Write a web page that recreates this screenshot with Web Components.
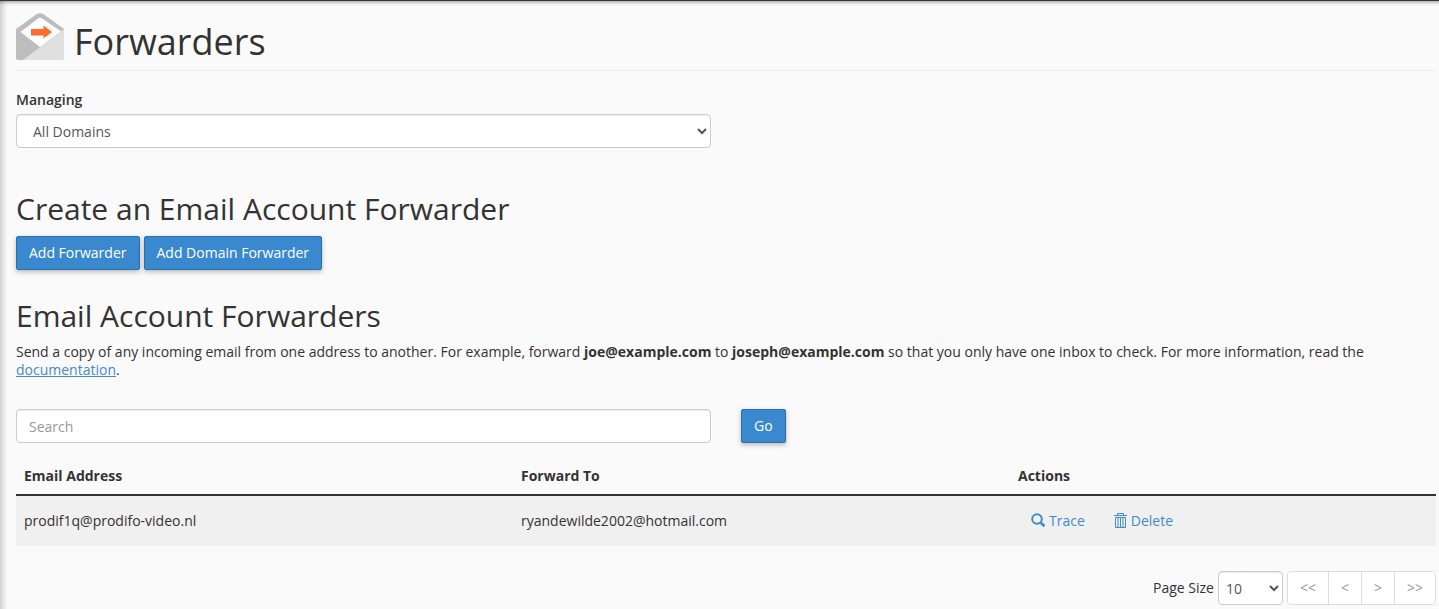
<!DOCTYPE html>
<html lang="en">
<head>
<meta charset="utf-8">
<meta name="viewport" content="width=device-width, initial-scale=1">
<title>Forwarders</title>
<style>
  html { background: #fafafa; }
  body {
    margin: 0;
    font: 14px/18px "Open Sans", "Noto Sans", sans-serif;
    color: #333;
    --link: #428bca;
    --primary: #3a89cf;
    --primary-border: #2a6fb0;
    --control-border: #ccc;
  }
</style>
</head>
<body>
<mail-panel>
  <page-title>Forwarders</page-title>
  <domain-picker></domain-picker>
  <panel-section heading="Create an Email Account Forwarder">
    <button-row>
      <action-button>Add Forwarder</action-button>
      <action-button>Add Domain Forwarder</action-button>
    </button-row>
  </panel-section>
  <panel-section heading="Email Account Forwarders">
    <intro-text></intro-text>
    <search-bar></search-bar>
    <forwarder-table></forwarder-table>
    <table-pager></table-pager>
  </panel-section>
</mail-panel>

<script>
const define = (name, html) => {
  const template = document.createElement('template');
  template.innerHTML = html;
  customElements.define(name, class extends HTMLElement {
    constructor() {
      super();
      this.attachShadow({ mode: 'open' }).append(template.content.cloneNode(true));
    }
    connectedCallback() {
      const heading = this.shadowRoot.querySelector('[data-heading]');
      if (heading) heading.textContent = this.getAttribute('heading');
    }
  });
};

define('mail-panel', `
  <style>
    :host {
      display: block; box-sizing: border-box; min-height: 100vh;
      border-top: 1px solid #293a4a;
      padding: 11px 3px 4px 16px;
      background:
        linear-gradient(to bottom, rgba(0,0,0,.3), rgba(0,0,0,.05) 3px, transparent 6px),
        linear-gradient(to right, rgba(0,0,0,.17), rgba(0,0,0,.09) 3px, transparent 7px),
        #fafafa;
    }
  </style>
  <slot></slot>`);

define('page-title', `
  <style>
    :host { display: block; border-bottom: 1px solid #eee; margin-bottom: 20px; }
    h1 { display: flex; gap: 10px; align-items: flex-start; margin: 0; height: 58px; font-size: 36px; line-height: 60px; font-weight: 400; }
    svg { width: 48px; height: 48px; }
  </style>
  <h1>
    <svg viewBox="0 0 48 48" aria-hidden="true">
      <path d="M0 17 20.500 2.300Q24 0 27.500 2.300L48 17V30L8 48H2Q0 48 0 46Z" fill="#bdbdbd"/>
      <path d="M48 17V46Q48 48 46 48H7Z" fill="#e0e0e0"/>
      <path d="M22 6.500Q24 5 26 6.500L45 19.200 24 35 4.500 20Z" fill="#fff"/>
      <path d="M15 17H27.500V13.500L36 20 27.500 26.500V23.500H15Z" fill="#ff6c2c"/>
    </svg>
    <slot></slot>
  </h1>`);

define('domain-picker', `
  <style>
    :host { display: grid; grid-template-columns: 1fr 1fr; column-gap: 30px; margin-bottom: 43px; }
    label { display: block; margin-bottom: 5px; font-weight: 600; }
    select {
      display: block; box-sizing: border-box; width: 100%; height: 34px; padding: 6px 12px;
      font: inherit; color: #555; background: #fff;
      border: 1px solid var(--control-border); border-radius: 4px;
      box-shadow: inset 0 1px 1px rgba(0,0,0,.075);
    }
  </style>
  <div>
    <label for="domain">Managing</label>
    <select id="domain"><option>All Domains</option></select>
  </div>`);

define('panel-section', `
  <style>
    :host { display: block; }
    h2 { margin: 0 0 9px; font-size: 30px; line-height: 36px; font-weight: 400; }
  </style>
  <h2 data-heading></h2>
  <slot></slot>`);

define('button-row', `
  <style>:host { display: flex; gap: 4px; margin-bottom: 28px; }</style>
  <slot></slot>`);

const buttonStyle = `
  button {
    display: block; box-sizing: border-box; height: 34px; padding: 0 12px;
    font: inherit; color: #fff; background: var(--primary);
    border: 1px solid var(--primary-border); border-radius: 2px;
    box-shadow: 0 2px 5px rgba(0,0,0,.26);
  }`;

define('action-button', `
  <style>:host { display: block; font-weight: 500; } ${buttonStyle}</style>
  <button type="button"><slot></slot></button>`);

define('intro-text', `
  <style>
    :host { display: block; margin-bottom: 30px; }
    p { margin: 0; }
    a { color: var(--link); }
  </style>
  <p>Send a copy of any incoming email from one address to another. For example, forward <strong>joe@example.com</strong> to <strong>joseph@example.com</strong> so that you only have one inbox to check. For more information, read the <a href="#documentation">documentation</a>.</p>`);

define('search-bar', `
  <style>
    :host { display: block; margin-bottom: 15px; }
    form { display: grid; grid-template-columns: 1fr 1fr; column-gap: 30px; justify-items: start; margin: 0; }
    input {
      display: block; box-sizing: border-box; width: 100%; height: 34px; padding: 6px 12px;
      font: inherit; color: #555; background: #fff;
      border: 1px solid var(--control-border); border-radius: 4px;
      box-shadow: inset 0 1px 1px rgba(0,0,0,.075);
    }
    input::placeholder { color: #999; opacity: 1; }
  </style>
  <form role="search">
    <input type="text" placeholder="Search" aria-label="Search">
    <action-button>Go</action-button>
  </form>`);

define('forwarder-table', `
  <style>
    :host { display: block; margin-bottom: 25px; }
    table { width: 100%; table-layout: fixed; border-collapse: separate; border-spacing: 0; }
    th, td { box-sizing: border-box; text-align: left; vertical-align: middle; }
    th { padding: 9px 8px; font-weight: 700; border-bottom: 2px solid #333; }
    td { height: 50px; padding: 8px; background: #f0f0f0; }
    .wide { width: 35%; }
    .actions { display: flex; gap: 28px; padding-left: 13px; }
    a { display: flex; gap: 3px; color: var(--link); text-decoration: none; }
    svg { width: 15px; height: 16px; }
  </style>
  <table>
    <thead>
      <tr><th class="wide" scope="col">Email Address</th><th class="wide" scope="col">Forward To</th><th scope="col">Actions</th></tr>
    </thead>
    <tbody>
      <tr>
        <td>prodif1q@prodifo-video.nl</td>
        <td>ryandewilde2002@hotmail.com</td>
        <td>
          <div class="actions">
            <a href="#trace"><svg viewBox="0 0 15 16" aria-hidden="true" fill="none" stroke="currentColor"><circle cx="6" cy="7" r="4.800" stroke-width="2"/><path d="m9.800 10.800 3.700 3.500" stroke-width="2.600"/></svg>Trace</a>
            <a href="#delete"><svg viewBox="0 0 15 16" aria-hidden="true" fill="none" stroke="currentColor"><path d="M1 3.500H14M4.500 3V1.500H10.500V3M2.500 5.500H12.500V15.500H2.500ZM5 6V15M7.500 6V15M10 6V15"/></svg>Delete</a>
          </div>
        </td>
      </tr>
    </tbody>
  </table>`);

define('table-pager', `
  <style>
    :host { display: flex; align-items: center; justify-content: flex-end; gap: 4px; }
    select {
      box-sizing: border-box; width: 65px; height: 34px; padding: 3px;
      font: inherit; color: #555; background: #fff;
      border: 1px solid var(--control-border); border-radius: 4px;
      box-shadow: inset 0 1px 1px rgba(0,0,0,.075);
    }
    nav { display: flex; border: 1px solid #ddd; border-radius: 4px; background: #fff; overflow: hidden; }
    button { height: 32px; padding: 0 12px; font: inherit; color: #999; background: #fff; border: 0; }
    button + button { border-left: 1px solid #ddd; }
  </style>
  <label for="size">Page Size</label>
  <select id="size"><option>10</option></select>
  <nav aria-label="Pages">
    <button type="button" disabled>&lt;&lt;</button>
    <button type="button" disabled>&lt;</button>
    <button type="button" disabled>&gt;</button>
    <button type="button" disabled>&gt;&gt;</button>
  </nav>`);
</script>
</body>
</html>
